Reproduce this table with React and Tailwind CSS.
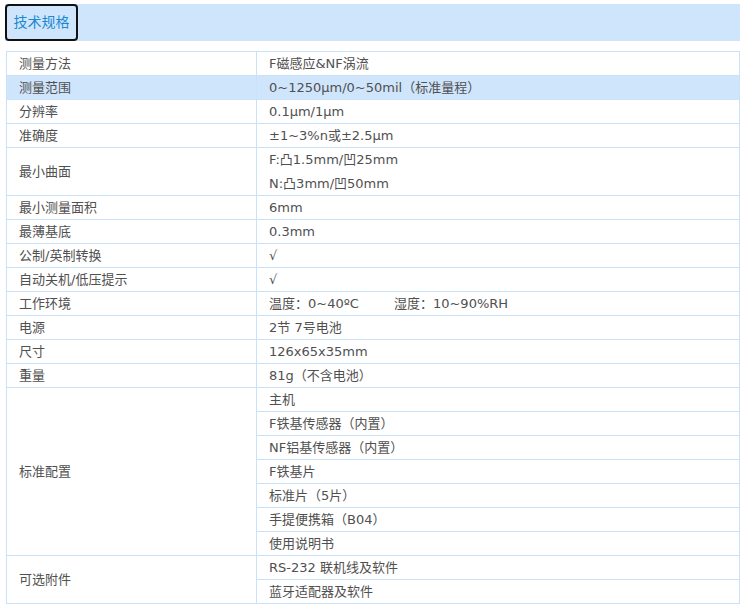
import React from 'react';

const rows = [
  { label: '测量方法', value: ['F磁感应&NF涡流'] },
  { label: '测量范围', value: ['0~1250μm/0~50mil（标准量程）'], hl: true },
  { label: '分辨率', value: ['0.1μm/1μm'] },
  { label: '准确度', value: ['±1~3%n或±2.5μm'] },
  { label: '最小曲面', value: ['F:凸1.5mm/凹25mm', 'N:凸3mm/凹50mm'] },
  { label: '最小测量面积', value: ['6mm'] },
  { label: '最薄基底', value: ['0.3mm'] },
  { label: '公制/英制转换', value: ['√'] },
  { label: '自动关机/低压提示', value: ['√'] },
  { label: '工作环境', env: true },
  { label: '电源', value: ['2节 7号电池'] },
  { label: '尺寸', value: ['126x65x35mm'] },
  { label: '重量', value: ['81g（不含电池）'] },
];

const config = ['主机', 'F铁基传感器（内置）', 'NF铝基传感器（内置）', 'F铁基片', '标准片（5片）', '手提便携箱（B04）', '使用说明书'];
const extras = ['RS-232 联机线及软件', '蓝牙适配器及软件'];

const cell = 'border border-[#c9e1fa] px-3 py-0 align-middle';

function Group({ label, items }) {
  return items.map((item, i) => (
    <tr key={item}>
      {i === 0 && (
        <td rowSpan={items.length} className={cell}>{label}</td>
      )}
      <td className={cell}>{item}</td>
    </tr>
  ));
}

export default function App() {
  return (
    <div className="w-[745px] h-[607px] bg-white text-[13px] text-[#505050] font-['DejaVu_Sans','Noto_Sans_CJK_SC',sans-serif]">
      <div className="pt-1 pl-[5px] pr-[5px]">
        <div className="flex h-[37px] bg-[#cfe5fc]">
          <div className="w-[73px] border-2 border-[#111] rounded-[4px] flex items-center justify-center text-[14px] text-[#1a88d2]">
            技术规格
          </div>
        </div>
      </div>
      <table className="mt-[10px] ml-[6px] w-[734px] border-collapse leading-[23px]">
        <colgroup>
          <col className="w-[250px]" />
          <col />
        </colgroup>
        <tbody>
          {rows.map((r) => (
            <tr key={r.label} className={r.hl ? 'bg-[#cfe5fc]' : ''}>
              <td className={cell}>{r.label}</td>
              <td className={cell}>
                {r.env ? (
                  <span>温度：0~40ºC<span className="ml-[35px]">湿度：10~90%RH</span></span>
                ) : r.value.length > 1 ? (
                  r.value.map((v) => <div key={v} className="leading-[23.5px]">{v}</div>)
                ) : (
                  r.value[0]
                )}
              </td>
            </tr>
          ))}
          <Group label="标准配置" items={config} />
          <Group label="可选附件" items={extras} />
        </tbody>
      </table>
    </div>
  );
}
